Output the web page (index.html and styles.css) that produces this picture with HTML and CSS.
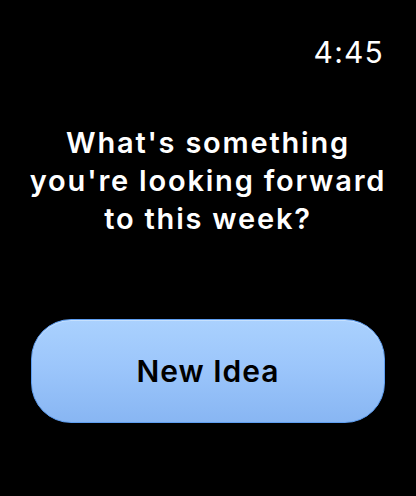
FILE: index.html
```html
<!DOCTYPE html>
<html>
<head>
<meta charset="utf-8">
<link rel="stylesheet" href="styles.css">
</head>
<body>
<div class="screen">
  <div class="status"><span class="time">4:45</span></div>
  <p class="prompt">What's something you're looking forward to this week?</p>
  <button class="idea-btn">New Idea</button>
</div>
</body>
</html>
```
FILE: styles.css
```css
html, body {
  margin: 0;
  padding: 0;
  background: #000;
}
.screen {
  width: 416px;
  height: 496px;
  display: flex;
  flex-direction: column;
  font-family: Inter, "Noto Sans", sans-serif;
  color: #fff;
}
.status {
  display: flex;
  justify-content: flex-end;
  padding: 34px 32px 0 0;
}
.time {
  font-size: 30px;
  line-height: 36px;
  font-weight: 400;
  letter-spacing: 1.2px;
}
.prompt {
  margin: 54px 20px 0;
  text-align: center;
  font-size: 29px;
  line-height: 38px;
  font-weight: 600;
  letter-spacing: 1.8px;
}
.idea-btn {
  margin: 81px 0 0 31px;
  width: 354px;
  height: 104px;
  border-radius: 40px;
  border: 1.5px solid #5f9ef0;
  background: linear-gradient(180deg, #aad1fe 0%, #9cc6fb 45%, #88b6f3 100%);
  box-shadow: inset 0 1px 0 rgba(255,255,255,0.35);
  font-family: Inter, "Noto Sans", sans-serif;
  font-size: 30px;
  font-weight: 600;
  letter-spacing: 1px;
  color: #000;
  padding: 0;
}
```
